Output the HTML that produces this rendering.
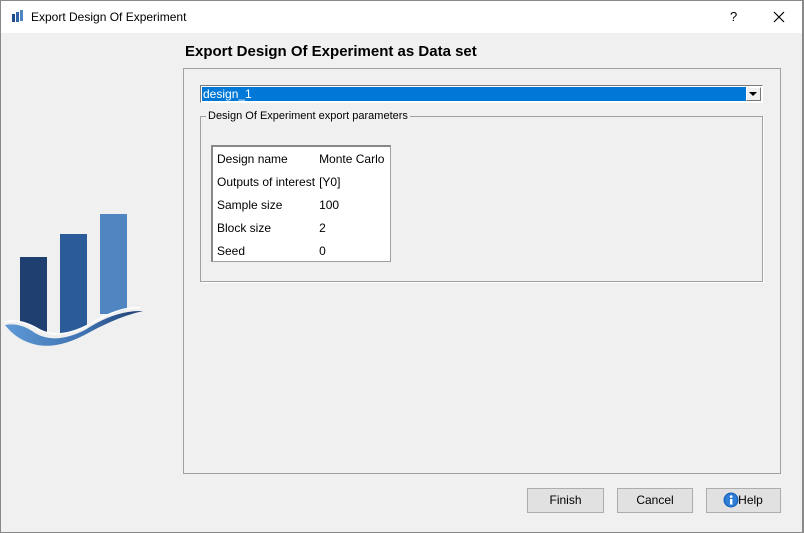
<!DOCTYPE html>
<html><head><style>
*{margin:0;padding:0;box-sizing:border-box}
body{width:804px;height:533px;background:#f0f0f0;font-family:"Liberation Sans",sans-serif;font-size:12px;color:#000;position:relative;overflow:hidden}
.abs{position:absolute}
.btn{position:absolute;top:488px;height:25px;background:#e1e1e1;border:1px solid #adadad;text-align:center;line-height:23px;font-size:12px}
td{height:23px;padding:0 0 0 4px;white-space:nowrap;font-size:12px}
</style></head><body>
<div class="abs" style="left:0;top:0;width:804px;height:33px;background:#fff;border-top:1px solid #888"></div>
<svg class="abs" style="left:11px;top:9px" width="14" height="14" viewBox="0 0 14 14"><rect x="1" y="5" width="3" height="8" fill="#1f4d8a"/><rect x="5" y="3" width="3" height="10" fill="#2e63a8"/><rect x="9" y="1" width="3" height="11" fill="#4f86c2"/></svg>
<div class="abs" style="left:31px;top:10px;font-size:12px">Export Design Of Experiment</div>
<div class="abs" style="left:730px;top:9px;font-size:13px">?</div>
<svg class="abs" style="left:773px;top:11px" width="12" height="12"><path d="M1 1L11 11M11 1L1 11" stroke="#000" stroke-width="1.2"/></svg>
<div class="abs" style="left:185px;top:43px;font-size:15px;font-weight:bold">Export Design Of Experiment as Data set</div>
<svg class="abs" style="left:0;top:200px" width="160" height="160" viewBox="0 0 160 160">
<defs><linearGradient id="w" x1="0" x2="1"><stop offset="0" stop-color="#5e9ad6"/><stop offset="0.6" stop-color="#3d6fae"/><stop offset="1" stop-color="#1e3d6e"/></linearGradient></defs>
<rect x="20" y="57" width="27" height="85" fill="#1f3f70"/>
<rect x="60" y="34" width="27" height="100" fill="#2c5b99"/>
<rect x="100" y="14" width="27" height="100" fill="#4f86c2"/>
<path d="M-5 120 Q20 118 40 130 Q60 140 90 124 Q120 106 150 108 L150 160 L-5 160Z" fill="#f0f0f0"/>
<path d="M5 122 Q20 118 40 130 Q60 140 90 124 Q120 106 140 108" fill="none" stroke="#fff" stroke-width="1.5"/>
<path d="M5 125 Q20 122 35 133 Q55 145 85 130 Q115 110 143 111 Q120 116 90 132 Q55 152 30 143 Q15 138 5 125Z" fill="url(#w)"/>
</svg>
<div class="abs" style="left:0;top:0;width:1px;height:533px;background:#888"></div>
<div class="abs" style="left:802px;top:0;width:2px;height:533px;background:#888"></div>
<div class="abs" style="left:0;top:532px;width:804px;height:1px;background:#888"></div>
<div class="abs" style="left:183px;top:68px;width:598px;height:406px;border:1px solid #a0a0a0"></div>
<div class="abs" style="left:200px;top:85px;width:563px;height:18px;background:#fff;border:1px solid #7a7a7a;border-right-color:#fff;border-bottom-color:#fff"></div>
<div class="abs" style="left:202px;top:87px;width:544px;height:14px;background:#0078d7;color:#fff;line-height:14px;padding-left:1px">design_1</div>
<div class="abs" style="left:746px;top:87px;width:15px;height:14px;background:#f0f0f0;border:1px solid #fff;border-right-color:#777;border-bottom-color:#777"></div>
<svg class="abs" style="left:749px;top:92px" width="9" height="5"><path d="M0 0H8L4 4Z" fill="#000"/></svg>
<div class="abs" style="left:200px;top:116px;width:563px;height:166px;border:1px solid #a0a0a0;box-shadow:1px 1px 0 #fff"></div>
<div class="abs" style="left:206px;top:110px;background:#f0f0f0;padding:0 2px;font-size:11px">Design Of Experiment export parameters</div>
<div class="abs" style="left:211px;top:145px;width:180px;height:117px;background:#fff;border:1px solid #a0a0a0;border-left:2px solid #888;border-top:2px solid #888;overflow:hidden">
<table style="border-collapse:collapse"><tr><td>Design name</td><td>Monte Carlo</td></tr><tr><td>Outputs of interest</td><td>[Y0]</td></tr><tr><td>Sample size</td><td>100</td></tr><tr><td>Block size</td><td>2</td></tr><tr><td>Seed</td><td>0</td></tr></table></div>
<div class="btn" style="left:527px;width:77px">Finish</div>
<div class="btn" style="left:617px;width:76px">Cancel</div>
<div class="btn" style="left:706px;width:75px;padding-left:14px">Help</div>
<svg class="abs" style="left:723px;top:492px" width="16" height="16"><circle cx="8" cy="8" r="7.5" fill="#1e66c0"/><circle cx="8" cy="8" r="6" fill="#2f7fd8"/><rect x="7" y="7" width="2.4" height="5.5" fill="#fff"/><circle cx="8.2" cy="4.6" r="1.3" fill="#fff"/></svg>
</body></html>
